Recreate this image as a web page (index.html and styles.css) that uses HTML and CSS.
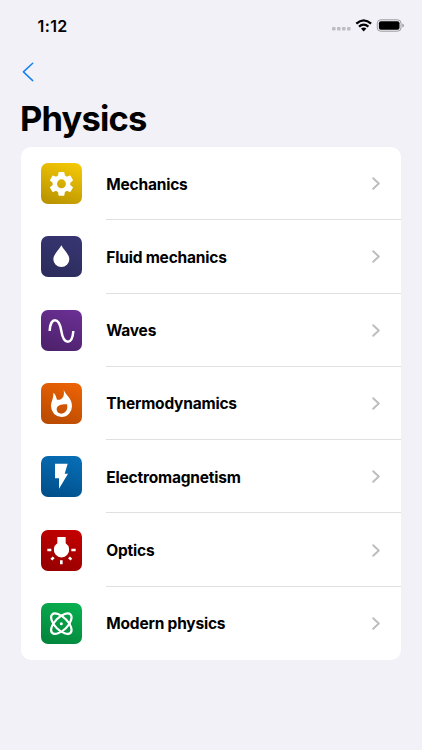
FILE: index.html
```
<!DOCTYPE html>
<html lang="en">
<head>
<meta charset="utf-8">
<title>Physics</title>
<link rel="stylesheet" href="styles.css">
</head>
<body>
<header class="status">
  <span class="time">1:12</span>
  <svg class="indicators" viewBox="0 0 76 18" aria-hidden="true">
    <g fill="#bdbdc2"><rect x="1" y="8" width="3.6" height="3.6" rx="1"/><rect x="6" y="8" width="3.6" height="3.6" rx="1"/><rect x="11" y="8" width="3.6" height="3.6" rx="1"/><rect x="16" y="8" width="3.6" height="3.6" rx="1"/></g>
    <g fill="none" stroke="#000" stroke-width="2.3"><path d="M25.3 4.6Q32.7-1.9 40.1 4.6"/><path d="M28 7.6Q32.7 3.6 37.4 7.6"/></g>
    <path d="M30 9.6Q32.7 7.4 35.4 9.6L32.7 12.4Z"/>
    <rect x="46.3" y=".8" width="23.7" height="11.4" rx="3.4" fill="none" stroke="#9b9b9f"/>
    <rect x="47.9" y="2.3" width="20.6" height="8.4" rx="2"/>
    <path d="M71.3 4.5Q73 5 73 6.5T71.3 8.5Z" fill="#9b9b9f"/>
  </svg>
</header>
<nav class="nav">
  <svg class="back" viewBox="0 0 12 20" aria-label="Back"><path d="M10.7 1.2 1.4 9.9l9.3 8.7"/></svg>
</nav>
<h1 class="title">Physics</h1>
<main class="list">
  <div class="row">
    <svg class="icon gold" viewBox="30 28 123 123"><path fill-rule="evenodd" transform="translate(47 46) scale(3.7)" d="M19.14 12.94c.04-.3.06-.61.06-.94s-.02-.64-.07-.94l2.03-1.58a.49.49 0 0 0 .12-.61l-1.92-3.32a.49.49 0 0 0-.59-.22l-2.39.96a7 7 0 0 0-1.62-.94l-.36-2.54a.48.48 0 0 0-.48-.41h-3.84a.48.48 0 0 0-.47.41l-.36 2.54a7.3 7.3 0 0 0-1.62.94l-2.39-.96a.48.48 0 0 0-.59.22L2.74 8.87a.47.47 0 0 0 .12.61l2.03 1.58a6 6 0 0 0-.02 1.88l-2.03 1.58a.49.49 0 0 0-.12.61l1.92 3.32c.12.22.37.29.59.22l2.39-.96c.5.38 1.03.7 1.62.94l.36 2.54c.05.24.24.41.48.41h3.84c.24 0 .44-.17.47-.41l.36-2.54a7.3 7.3 0 0 0 1.62-.94l2.39.96c.22.08.47 0 .59-.22l1.92-3.32a.47.47 0 0 0-.12-.61zM12 15.6a3.6 3.6 0 1 1 0-7.2 3.6 3.6 0 0 1 0 7.2z"/></svg>
    <div class="cell"><span>Mechanics</span><svg class="chevron" viewBox="0 0 8 13"><path d="m1.2 1.2 5.6 5.3-5.6 5.3"/></svg></div>
  </div>
  <div class="row">
    <svg class="icon navy" viewBox="30 28 123 123"><path d="M91 56C84 70 67 83 67 98a24 23 0 0 0 48 0C115 83 98 70 91 56Z"/></svg>
    <div class="cell"><span>Fluid mechanics</span><svg class="chevron" viewBox="0 0 8 13"><path d="m1.2 1.2 5.6 5.3-5.6 5.3"/></svg></div>
  </div>
  <div class="row">
    <svg class="icon purple" viewBox="30 28 123 123"><path class="line wave" d="M56 91C58 48 84 48 91 91S124 134 127 91"/></svg>
    <div class="cell"><span>Waves</span><svg class="chevron" viewBox="0 0 8 13"><path d="m1.2 1.2 5.6 5.3-5.6 5.3"/></svg></div>
  </div>
  <div class="row">
    <svg class="icon orange" viewBox="30 28 123 123"><path fill-rule="evenodd" d="M98 48C104 65 123 72 123 97A31 32 0 0 1 60 98C60 83 68 75 67 57C75 62 75 70 78 78C93 80 102 69 98 48ZM108 92C96 91 77 93 77 107C77 115 83 120 91 120C104 120 112 106 108 92Z"/></svg>
    <div class="cell"><span>Thermodynamics</span><svg class="chevron" viewBox="0 0 8 13"><path d="m1.2 1.2 5.6 5.3-5.6 5.3"/></svg></div>
  </div>
  <div class="row">
    <svg class="icon blue" viewBox="30 28 123 123"><path d="M72 51h38l-9 30h10L84 126V95H72Z"/></svg>
    <div class="cell"><span>Electromagnetism</span><svg class="chevron" viewBox="0 0 8 13"><path d="m1.2 1.2 5.6 5.3-5.6 5.3"/></svg></div>
  </div>
  <div class="row">
    <svg class="icon red" viewBox="30 28 123 123"><path d="M79 49h25v19a23 23 0 1 1-25 0Z"/><path class="line ray" d="M49 88h12M121 88h13M91 119v12M68 110l-7 7M114 110l7 7"/></svg>
    <div class="cell"><span>Optics</span><svg class="chevron" viewBox="0 0 8 13"><path d="m1.2 1.2 5.6 5.3-5.6 5.3"/></svg></div>
  </div>
  <div class="row">
    <svg class="icon green" viewBox="30 28 123 123"><g class="line orbit"><ellipse cx="91" cy="90" rx="39" ry="19" transform="rotate(45 91 90)"/><ellipse cx="91" cy="90" rx="39" ry="19" transform="rotate(-45 91 90)"/></g><circle cx="91" cy="90" r="4.5"/></svg>
    <div class="cell"><span>Modern physics</span><svg class="chevron" viewBox="0 0 8 13"><path d="m1.2 1.2 5.6 5.3-5.6 5.3"/></svg></div>
  </div>
</main>
</body>
</html>
```
FILE: styles.css
```
* { box-sizing: border-box; }
body {
  margin: 0;
  height: 750px;
  overflow: hidden;
  background: #f2f1f8;
  color: #000;
  font-family: Inter, "Liberation Sans", sans-serif;
}
svg { display: block; flex: none; }
.status {
  height: 52px;
  padding: 0 15px 0 37.5px;
  display: flex;
  align-items: center;
  justify-content: space-between;
}
.time { font-size: 16px; font-weight: 600; letter-spacing: .4px; }
.indicators { width: 76px; height: 18px; margin-top: 4px; }
.nav { height: 40px; padding: 10px 0 0 21.5px; }
.back { width: 12px; height: 20px; }
.back path { fill: none; stroke: #1580f0; stroke-width: 1.5; stroke-linecap: round; stroke-linejoin: round; }
.title {
  margin: 0;
  padding-left: 20px;
  height: 55px;
  font-size: 34.5px;
  line-height: 54px;
  font-weight: 700;
  letter-spacing: -.85px;
}
.list {
  width: 380.5px;
  height: 513px;
  margin-left: 20.8px;
  border-radius: 10px;
  background: #fff;
  overflow: hidden;
  display: grid;
  grid-template-rows: repeat(7, 1fr);
}
.row { display: flex; align-items: center; padding-left: 20.2px; }
.icon { width: 41px; height: 41px; border-radius: 7px; fill: #fff; }
.cell {
  flex: 1;
  height: 100%;
  margin-left: 24.3px;
  padding-top: 2px;
  padding-right: 21.5px;
  display: flex;
  align-items: center;
  justify-content: space-between;
  border-bottom: 1px solid #e0e0e2;
  font-size: 15.5px;
  font-weight: 650;
  letter-spacing: -.2px;
}
.row:last-child .cell { border-bottom-color: transparent; }
.chevron { width: 8px; height: 13px; margin-top: -1px; }
.chevron path { fill: none; stroke: #bdbdc0; stroke-width: 1.9; stroke-linecap: round; stroke-linejoin: round; }
.line { fill: none; stroke: #fff; }
.wave { stroke-width: 7.5; }
.ray { stroke-width: 8; }
.orbit { stroke-width: 6.5; }
.gold { background: linear-gradient(200deg, #f8cb05, #b59000); }
.navy { background: linear-gradient(200deg, #373673, #2c2b5a); }
.purple { background: linear-gradient(200deg, #6c3096, #4b2068); }
.orange { background: linear-gradient(200deg, #ef6405, #b54900); }
.blue { background: linear-gradient(200deg, #0870b9, #004d87); }
.red { background: linear-gradient(200deg, #c70000, #920000); }
.green { background: linear-gradient(200deg, #09b251, #03823a); }
```
